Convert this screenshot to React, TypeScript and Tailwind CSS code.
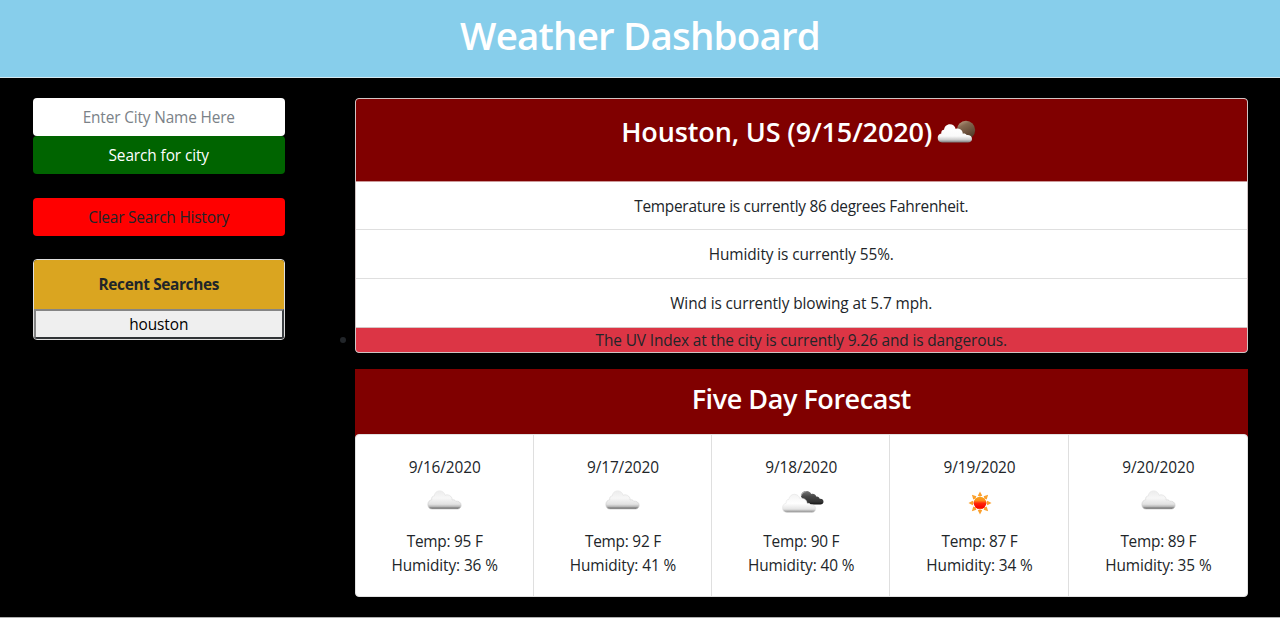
import React from 'react';

type Icon = 'cloud' | 'broken' | 'sun';

const days: { date: string; icon: Icon; temp: number; humidity: number }[] = [
  { date: '9/16/2020', icon: 'cloud', temp: 95, humidity: 36 },
  { date: '9/17/2020', icon: 'cloud', temp: 92, humidity: 41 },
  { date: '9/18/2020', icon: 'broken', temp: 90, humidity: 40 },
  { date: '9/19/2020', icon: 'sun', temp: 87, humidity: 34 },
  { date: '9/20/2020', icon: 'cloud', temp: 89, humidity: 35 },
];

const CLOUD =
  'M5 20C2.300 20 .9 18 .9 15.500C.9 12.900 2.400 11.100 4.700 10.800C4.300 8.300 5.500 7 7.300 6.900C7.600 3.700 9.800 1.800 12.600 1.800C15.400 1.800 17.500 3.500 18 6.300C19.200 5.600 20.900 5.600 22.300 6.300C24.100 7.200 25.200 9 25.200 11C26.500 10.500 28 10.900 28.700 12.200C31.500 11.800 34.100 13.400 34.100 16.200C34.100 18.400 32.600 20 30.500 20Z';

function CloudIcon() {
  return (
    <svg width="35" height="22" viewBox="0 0 35 22" aria-hidden="true">
      <defs>
        <linearGradient id="cloudFill" x1="0" y1="0" x2="0" y2="1">
          <stop offset="0" stopColor="#ececec" />
          <stop offset=".4" stopColor="#f7f7f7" />
          <stop offset=".74" stopColor="#e2e2e2" />
          <stop offset=".86" stopColor="#bbb" />
          <stop offset="1" stopColor="#555" />
        </linearGradient>
        <linearGradient id="cloudEdge" x1="0" y1="0" x2="0" y2="1">
          <stop offset="0" stopColor="#ececec" />
          <stop offset="1" stopColor="#c4c4c4" />
        </linearGradient>
      </defs>
      <path d={CLOUD} fill="url(#cloudFill)" stroke="url(#cloudEdge)" strokeWidth=".7" />
    </svg>
  );
}

function BrokenCloudsIcon() {
  return (
    <svg width="42" height="24" viewBox="0 0 42 24" aria-hidden="true">
      <defs>
        <linearGradient id="darkCloud" x1="0" y1="0" x2="0" y2="1">
          <stop offset="0" stopColor="#777" />
          <stop offset=".4" stopColor="#484848" />
          <stop offset=".8" stopColor="#333" />
          <stop offset="1" stopColor="#111" />
        </linearGradient>
        <linearGradient id="frontCloud" x1="0" y1="0" x2="0" y2="1">
          <stop offset="0" stopColor="#f3f3f3" />
          <stop offset=".5" stopColor="#fff" />
          <stop offset=".82" stopColor="#e4e4e4" />
          <stop offset="1" stopColor="#888" />
        </linearGradient>
      </defs>
      <path
        d="M19 6.500C19.500 3 21.500 1 24.500 1C27 1 28.500 2.400 29.200 4C31.500 3.200 33.600 4.400 34.200 6.500C36 6 37.400 7.300 37.700 8.800C40 8.500 41.500 9.700 41.500 11.800C41.500 13.500 40 14.600 38.500 14.600H24Z"
        fill="url(#darkCloud)"
      />
      <path d="M19.200 5.500C19.900 2.900 22 1.500 24.500 1.500" fill="none" stroke="#aaa" strokeWidth="1.200" />
      <path
        d="M5 22.400C2 22.400.500 20.500.500 17.800C.500 15.300 1.900 13.600 4.200 13.200C3.900 10.800 5 9.400 6.900 9.300C7.400 6.200 9.600 4.300 12.400 4.300C15.200 4.300 17.400 6.200 18 8.900C19.300 8.200 21 8.200 22.400 9C24 9.900 25 11.500 25.100 13.500C26.600 13 28.100 13.500 28.800 14.800C31.600 14.500 33.700 16.100 33.700 18.700C33.700 21 32 22.400 29.800 22.400Z"
        fill="url(#frontCloud)"
        stroke="#e4e4e4"
        strokeWidth=".6"
      />
    </svg>
  );
}

function SunIcon() {
  const angles = [0, 45, 90, 135, 180, 225, 270, 315];
  return (
    <svg width="24" height="24" viewBox="0 0 24 24" aria-hidden="true">
      <defs>
        <linearGradient id="sunDisc" x1="0" y1="0" x2="0" y2="1">
          <stop offset="0" stopColor="#f5a51c" />
          <stop offset=".3" stopColor="#ff8c1a" />
          <stop offset=".52" stopColor="#ff2608" />
          <stop offset=".85" stopColor="#f80500" />
          <stop offset="1" stopColor="#ff5a10" />
        </linearGradient>
      </defs>
      {angles.map((a) => (
        <path key={a} d="M12 .5L14.200 4.700L12 5.600L9.800 4.700Z" fill="#fba02c" transform={`rotate(${a} 12 12)`} />
      ))}
      <circle cx="12" cy="12" r="6.300" fill="url(#sunDisc)" />
    </svg>
  );
}

function PartlyCloudyNightIcon() {
  return (
    <svg width="40" height="24" viewBox="0 0 40 24" aria-hidden="true">
      <defs>
        <linearGradient id="moonFill" x1="0" y1="0" x2=".5" y2="1">
          <stop offset="0" stopColor="#c9ab90" />
          <stop offset=".35" stopColor="#866a52" />
          <stop offset="1" stopColor="#553c29" />
        </linearGradient>
        <linearGradient id="nightCloud" x1="0" y1="0" x2="0" y2="1">
          <stop offset="0" stopColor="#fff" />
          <stop offset=".65" stopColor="#fafafa" />
          <stop offset=".85" stopColor="#ccc" />
          <stop offset="1" stopColor="#777" />
        </linearGradient>
      </defs>
      <circle cx="29" cy="10" r="9.200" fill="url(#moonFill)" />
      <path
        d="M5 22.500C2.300 22.500.700 20.700.700 18.100C.700 15.600 2 14 4.300 13.600C4 11.300 5.200 9.900 7 9.800C7.500 6.400 9.800 4.200 12.900 4.200C15.900 4.200 18 6 18.700 8.900C20.100 8.300 21.800 8.400 23.200 9.200C24.800 10.100 25.700 11.700 25.800 13.700C27.300 13.200 28.900 13.700 29.600 15C32.500 14.600 35 16.200 35 18.900C35 21 33.300 22.500 31 22.500Z"
        fill="url(#nightCloud)"
      />
    </svg>
  );
}

function DayIcon({ name }: { name: Icon }) {
  if (name === 'sun') return <span className="mt-[3px] flex"><SunIcon /></span>;
  if (name === 'broken') return <span className="mt-[2px] ml-[3px] flex"><BrokenCloudsIcon /></span>;
  return <span className="mt-[1px] flex"><CloudIcon /></span>;
}

export default function App() {
  return (
    <div className="h-[636px] w-full overflow-hidden bg-white font-['Open_Sans',sans-serif] text-[15.4px] leading-6 tracking-[-0.1px] text-[#212529]">
      <header className="flex h-[78px] justify-center border-b border-[#d5e9f0] bg-[#87ceeb] pt-[11px]">
        <h1 className="text-[38.5px] leading-[48px] font-semibold tracking-[-0.8px] text-white">Weather Dashboard</h1>
      </header>

      <main className="flex h-[540px] border-b border-[#b0b0b0] bg-black pt-5 pl-[33px]">
        <aside className="flex w-[251.500px] flex-col">
          <input
            type="text"
            placeholder="Enter City Name Here"
            className="h-[37.500px] w-full rounded bg-white pt-[2px] text-center tracking-[-0.15px] outline-none placeholder:text-[#7b8288]"
          />
          <button className="h-[38px] w-full rounded bg-[#006400] pt-[2px] text-white">Search for city</button>
          <button className="mt-6 h-[38px] w-full rounded bg-[#ff0000] pt-[2px] tracking-[-0.2px]">Clear Search History</button>
          <div className="mt-[23.500px] flex h-[80.500px] flex-col overflow-hidden rounded border border-[#dfdfdf]">
            <div className="flex h-[49px] items-center justify-center bg-[#daa520] font-bold tracking-[-0.35px]">Recent Searches</div>
            <button className="flex h-[29.500px] items-center justify-center border-2 border-t-[#858585] border-r-[#3c4043] border-b-[#303336] border-l-[#858585] bg-[#efefef] pt-[2px] text-black">
              houston
            </button>
          </div>
        </aside>

        <div className="flex w-[70px] items-start justify-end pt-[239px] pr-[8.500px]">
          <span className="size-[6px] rounded-full bg-[#212529]" />
        </div>

        <div className="w-[893.500px]">
          <section className="h-[254.500px] overflow-hidden rounded border border-[#d0c4c4] bg-white text-center">
            <div className="flex h-[83px] justify-center border-b border-[#c99] bg-[#800000] pt-[16px] pr-[4px]">
              <h2 className="text-[27px] leading-[34px] font-semibold tracking-[-0.12px] text-white">Houston, US (9/15/2020)</h2>
              <span className="mt-[5px] ml-[5px]"><PartlyCloudyNightIcon /></span>
            </div>
            <p className="flex h-[48px] items-center justify-center border-b border-[#dfdfdf] pt-[2px] tracking-[-0.27px]">Temperature is currently 86 degrees Fahrenheit.</p>
            <p className="flex h-[49px] items-center justify-center border-b border-[#dfdfdf] pt-[2px]">Humidity is currently 55%.</p>
            <p className="flex h-[49px] items-center justify-center border-b border-[#d5c5c5] pt-[2px]">Wind is currently blowing at 5.7 mph.</p>
            <p className="flex h-[24px] items-center justify-center bg-[#dc3545] pt-[2px] tracking-[-0.12px]">The UV Index at the city is currently 9.26 and is dangerous.</p>
          </section>

          <section className="mt-4">
            <div className="flex h-[65.500px] justify-center bg-[#800000] pt-[13px]">
              <h2 className="text-[27px] leading-[34px] font-semibold tracking-[-0.45px] text-white">Five Day Forecast</h2>
            </div>
            <div className="bg-[linear-gradient(#800000_4px,#000_4px)]">
              <div className="grid h-[163px] grid-cols-5 overflow-hidden rounded border border-[#e2e2e2] bg-white">
                {days.map((d) => (
                  <article key={d.date} className="flex flex-col items-center border-r border-[#dfdfdf] pt-[21px] pl-px last:border-r-0">
                    <p>{d.date}</p>
                    <div className="flex h-[50px] items-start justify-center pt-[8px]">
                      <DayIcon name={d.icon} />
                    </div>
                    <p className="tracking-[-0.25px]">Temp: {d.temp} F</p>
                    <p>Humidity: {d.humidity} %</p>
                  </article>
                ))}
              </div>
            </div>
          </section>
        </div>
      </main>
    </div>
  );
}
